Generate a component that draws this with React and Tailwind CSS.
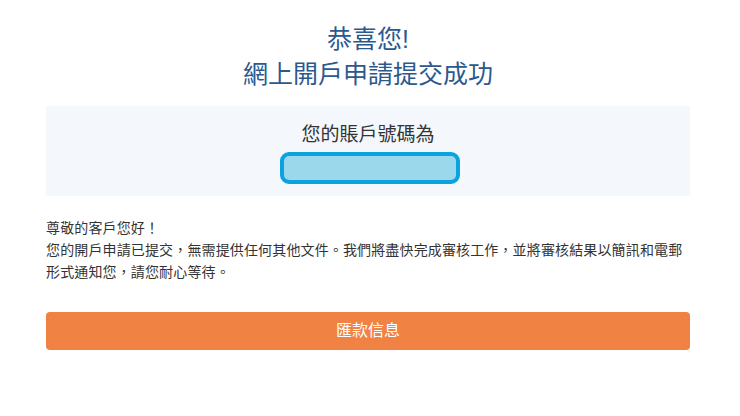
export default function App() {
  const font = { fontFamily: '"Liberation Sans", Arial, "Noto Sans CJK TC", sans-serif' };
  return (
    <div className="w-[740px] h-[416px] bg-white pl-[46px] pr-[50px] pt-[22px]" style={font}>
      <div className="text-center text-[#2b598e] text-[25px] leading-[35px]">
        <div>恭喜您!</div>
        <div>網上開戶申請提交成功</div>
      </div>
      <div className="mt-[14px] h-[90px] bg-[#f4f7fc] flex flex-col items-center pt-[17px]">
        <div className="text-[19px] leading-[24px] text-[#333]">您的賬戶號碼為</div>
        <div className="mt-[5px] ml-[3px] w-[180px] h-[32px] rounded-[9px] border-[4px] border-[#0ba2e0] bg-[#9cd8ec]" />
      </div>
      <div className="mt-[21px] text-[14px] leading-[22px] text-[#333] tracking-[0.14px]">
        <div>尊敬的客戶您好！</div>
        <div>您的開戶申請已提交，無需提供任何其他文件。我們將盡快完成審核工作，並將審核結果以簡訊和電郵</div>
        <div>形式通知您，請您耐心等待。</div>
      </div>
      <button className="mt-[29px] w-full h-[38px] rounded-[4px] bg-[#f08243] text-white text-[16px]">
        匯款信息
      </button>
    </div>
  );
}
